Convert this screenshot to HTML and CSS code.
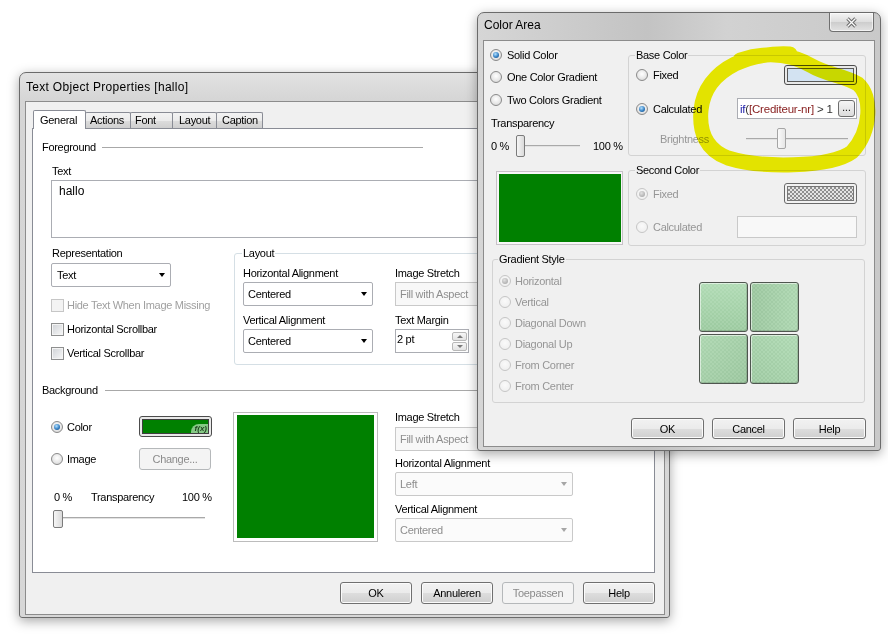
FILE: index.html
```html
<!DOCTYPE html>
<html>
<head>
<meta charset="utf-8">
<title>Text Object Properties</title>
<link rel="stylesheet" href="styles.css">
</head>
<body>
<div class="desktop">

  <div class="win win-props">
    <div class="titlebar"><span class="title">Text Object Properties [hallo]</span></div>
    <div class="client client-props">
      <div class="tabs">
        <div class="tab tab-general active">General</div>
        <div class="tab tab-actions">Actions</div>
        <div class="tab tab-font">Font</div>
        <div class="tab tab-layout">Layout</div>
        <div class="tab tab-caption">Caption</div>
      </div>
      <div class="tabpanel">
        <div class="sect-head sect-fg"><span>Foreground</span><span class="rule rule-fg"></span></div>
        <div class="fg-body">
          <div class="label lbl-text">Text</div>
          <div class="textarea">hallo</div>
          <div class="fg-row">
            <div class="fg-left">
              <div class="label">Representation</div>
              <div class="combo combo-rep"><span>Text</span><i class="arrow"></i></div>
              <div class="check-row first disabled"><span class="checkbox"></span><span>Hide Text When Image Missing</span></div>
              <div class="check-row"><span class="checkbox"></span><span>Horizontal Scrollbar</span></div>
              <div class="check-row"><span class="checkbox"></span><span>Vertical Scrollbar</span></div>
            </div>
            <fieldset class="group group-layout">
              <legend>Layout</legend>
              <div class="layout-cols">
                <div class="col col-a">
                  <div class="label">Horizontal Alignment</div>
                  <div class="combo"><span>Centered</span><i class="arrow"></i></div>
                  <div class="label gap7">Vertical Alignment</div>
                  <div class="combo"><span>Centered</span><i class="arrow"></i></div>
                </div>
                <div class="col col-b">
                  <div class="label">Image Stretch</div>
                  <div class="field disabled">Fill with Aspect</div>
                  <div class="label gap7">Text Margin</div>
                  <div class="field spin"><span>2 pt</span><span class="spinner"><i class="spin-btn up"></i><i class="spin-btn down"></i></span></div>
                </div>
              </div>
            </fieldset>
          </div>
        </div>

        <div class="sect-head sect-bg"><span>Background</span><span class="rule rule-bg"></span></div>
        <div class="bg-body">
          <div class="bg-left">
            <div class="bg-row row-color">
              <span class="radio-row"><span class="radio checked"></span><span>Color</span></span>
              <span class="colorbtn"><span class="swatch"><span class="fx">f(x)</span></span></span>
            </div>
            <div class="bg-row row-image">
              <span class="radio-row"><span class="radio"></span><span>Image</span></span>
              <span class="btn btn-change disabled">Change...</span>
            </div>
            <div class="pct-row"><span class="p0">0 %</span><span class="pt">Transparency</span><span>100 %</span></div>
            <div class="slider slider-bg"><span class="thumb"></span></div>
          </div>
          <div class="preview"><div class="green"></div></div>
          <div class="bg-right">
            <div class="label">Image Stretch</div>
            <div class="field disabled f-stretch">Fill with Aspect</div>
            <div class="label g5">Horizontal Alignment</div>
            <div class="combo disabled"><span>Left</span><i class="arrow"></i></div>
            <div class="label g6">Vertical Alignment</div>
            <div class="combo disabled"><span>Centered</span><i class="arrow"></i></div>
          </div>
        </div>
      </div>
      <div class="buttons">
        <span class="btn">OK</span>
        <span class="btn">Annuleren</span>
        <span class="btn disabled">Toepassen</span>
        <span class="btn">Help</span>
      </div>
    </div>
  </div>

  <div class="win win-color">
    <div class="titlebar">
      <span class="title">Color Area</span>
      <span class="closebtn">
        <svg width="13" height="11" viewBox="0 0 13 11"><path d="M2.5 1.5 L10.5 9.5 M10.5 1.5 L2.5 9.5" stroke="#6a6a6a" stroke-width="3.4" fill="none"/><path d="M2.5 1.5 L10.5 9.5 M10.5 1.5 L2.5 9.5" stroke="#fbfbfb" stroke-width="1.3" fill="none"/></svg>
      </span>
    </div>
    <div class="client client-color">
      <div class="ca-grid">
        <div class="ca-left">
          <div class="radio-row"><span class="radio checked"></span><span>Solid Color</span></div>
          <div class="radio-row r2"><span class="radio"></span><span>One Color Gradient</span></div>
          <div class="radio-row r3"><span class="radio"></span><span>Two Colors Gradient</span></div>
          <div class="label ca-trans">Transparency</div>
          <div class="ca-slider-row"><span class="p0">0 %</span><span class="slider slider-ca"><span class="thumb"></span></span><span class="p100">100 %</span></div>
        </div>
        <fieldset class="group ca-group base">
          <legend>Base Color</legend>
          <div class="ca-row row-fixed">
            <span class="radio-row"><span class="radio"></span><span>Fixed</span></span>
            <span class="colorbtn cb-blue"><span class="swatch"></span></span>
          </div>
          <div class="ca-row row-calc">
            <span class="radio-row"><span class="radio checked"></span><span>Calculated</span></span>
            <span class="expr"><span class="expr-text"><span class="kw">if</span><span class="op">(</span><span class="fld">[Crediteur-nr]</span><span class="op"> &gt; 1</span></span><span class="dots">...</span></span>
          </div>
          <div class="ca-row row-bright">
            <span class="dis-text bright-lbl">Brightness</span>
            <span class="slider slider-bright"><span class="thumb"></span></span>
          </div>
        </fieldset>
        <div class="ca-preview"><div class="green"></div></div>
        <fieldset class="group ca-group second">
          <legend>Second Color</legend>
          <div class="ca-row row2-fixed">
            <span class="radio-row dis-text"><span class="radio dis checked"></span><span>Fixed</span></span>
            <span class="colorbtn cb-checker"><span class="swatch"></span></span>
          </div>
          <div class="ca-row row2-calc">
            <span class="radio-row dis-text"><span class="radio dis"></span><span>Calculated</span></span>
            <span class="field disabled f-empty"></span>
          </div>
        </fieldset>
        <fieldset class="group ca-group gradient">
          <legend>Gradient Style</legend>
          <div class="grad-body">
            <div class="grad-list">
              <div class="radio-row dis-text"><span class="radio dis checked"></span><span>Horizontal</span></div>
              <div class="radio-row dis-text"><span class="radio dis"></span><span>Vertical</span></div>
              <div class="radio-row dis-text"><span class="radio dis"></span><span>Diagonal Down</span></div>
              <div class="radio-row dis-text"><span class="radio dis"></span><span>Diagonal Up</span></div>
              <div class="radio-row dis-text"><span class="radio dis"></span><span>From Corner</span></div>
              <div class="radio-row dis-text"><span class="radio dis"></span><span>From Center</span></div>
            </div>
            <div class="tiles">
              <span class="tile t1"></span><span class="tile t2"></span>
              <span class="tile t3"></span><span class="tile t4"></span>
            </div>
          </div>
        </fieldset>
        <div class="ca-buttons">
          <span class="btn">OK</span>
          <span class="btn">Cancel</span>
          <span class="btn">Help</span>
        </div>
      </div>
    </div>
  </div>

  <svg class="scribble" width="888" height="640" viewBox="0 0 888 640">
    <path d="M740 60 C770 50 795 56 812 66 C825 74 845 76 858 84 C872 96 872 130 852 152 C830 168 760 168 728 158 C706 150 699 132 701 110 C703 90 715 74 735 64 C750 57 768 53 790 54" fill="none" stroke="#f2f200" stroke-width="15" stroke-linecap="round" stroke-linejoin="round"/>
  </svg>
</div>
</body>
</html>
```

FILE: styles.css
```css
* { box-sizing: border-box; }
html, body { margin: 0; padding: 0; }
body {
  background: #fff;
  font-family: "Liberation Sans", Arial, sans-serif;
  font-size: 11px;
  letter-spacing: -0.3px;
  color: #000;
  width: 888px;
  height: 640px;
  overflow: hidden;
}
.desktop { position: relative; width: 888px; height: 640px; }

/* windows */
.win {
  position: absolute;
  border: 1px solid #6b6b6b;
  border-radius: 7px 7px 3px 3px;
  display: flex;
  flex-direction: column;
  box-shadow: 0 3px 12px rgba(0,0,0,.35);
}
.win-props {
  left: 19px; top: 72px; width: 651px; height: 546px;
  background: linear-gradient(180deg, #e2e2e2, #d5d5d5 28px, #d7d7d7);
}
.win-color {
  left: 477px; top: 12px; width: 404px; height: 439px;
  background: linear-gradient(90deg, #d6d6d6, #c3c3c3 42%, #d2d2d2 62%, #c9c9c9);
}
.titlebar { display: flex; justify-content: space-between; align-items: flex-start; flex: none; }
.win-props .titlebar { height: 28px; padding-left: 6px; }
.win-color .titlebar { height: 27px; padding-left: 6px; }
.title { font-size: 12px; letter-spacing: 0; }
.win-props .title { line-height: 28px; letter-spacing: .3px; }
.win-color .title { line-height: 24px; }
.closebtn {
  width: 45px; height: 19px; margin-right: 6px;
  border: 1px solid #707070; border-top: none;
  border-radius: 0 0 4px 4px;
  background: linear-gradient(#f4f4f4, #dedede 50%, #cdcdcd 51%, #e2e2e2);
  box-shadow: inset 0 0 0 1px rgba(255,255,255,.6);
  display: flex; align-items: center; justify-content: center;
}
.client { background: #f0f0f0; border: 1px solid #8c8c8c; flex: none; }
.client-props { margin: 0 4px 0 5px; height: 514px; padding: 8px 0 0 6px; }
.client-color { margin: 0 5px; height: 407px; padding: 7px 0 0 8px; }

/* tabs */
.tabs { display: flex; align-items: flex-end; height: 18px; margin-left: 1px; position: relative; z-index: 1; }
.tab {
  height: 16px; margin-right: -1px;
  border: 1px solid #898c95; border-bottom: none;
  border-radius: 2px 2px 0 0;
  line-height: 15px;
  background: linear-gradient(#f3f3f3, #ebebeb 50%, #dddddd 51%, #cfcfcf);
}
.tab.active { height: 19px; margin-bottom: -1px; background: #fff; line-height: 18px; }
.tab-general { width: 53px; padding-left: 6px; }
.tab-actions { width: 46px; padding-left: 4px; }
.tab-font { width: 43px; padding-left: 4px; }
.tab-layout { width: 45px; padding-left: 6px; }
.tab-caption { width: 47px; padding-left: 5px; }
.tabpanel { width: 623px; height: 445px; background: #fff; border: 1px solid #898c95; padding-left: 9px; }

.sect-head { display: flex; align-items: center; height: 14px; line-height: 14px; }
.sect-fg { margin-top: 11px; }
.sect-bg { margin-top: 18px; }
.rule { height: 1px; background: #a8a8a8; }
.rule-fg { width: 321px; margin-left: 6px; }
.rule-bg { width: 540px; margin-left: 7px; }

.label { height: 14px; line-height: 14px; white-space: nowrap; }
.fg-body { margin-left: 9px; }
.lbl-text { margin-top: 10px; padding-left: 1px; }
.textarea {
  margin-top: 2px; width: 594px; height: 58px;
  border: 1px solid #abadb3; background: #fff;
  padding: 3px 7px; font-size: 12px; letter-spacing: 0; line-height: 14px;
}
.fg-row { display: flex; margin-top: 8px; }
.fg-left { width: 183px; display: flex; flex-direction: column; }
.fg-left > .label { padding-left: 1px; }

.combo {
  height: 24px; border: 1px solid #abadb3; border-radius: 2px; background: #fff;
  display: flex; align-items: center; justify-content: space-between;
  padding: 0 5px 0 4px; white-space: nowrap;
}
.combo .arrow { width: 0; height: 0; border-left: 3.5px solid transparent; border-right: 3.5px solid transparent; border-top: 4px solid #000; }
.combo.disabled { border-color: #c9c9c9; color: #8e8e8e; background: #fbfbfb; }
.combo.disabled .arrow { border-top-color: #a6a6a6; }
.combo-rep { width: 120px; margin-top: 3px; padding-left: 5px; }

.field {
  height: 24px; border: 1px solid #abadb3; background: #fff;
  padding-left: 4px; line-height: 22px; white-space: nowrap; overflow: hidden;
}
.field.disabled { border-color: #c9c9c9; color: #8e8e8e; background: #f8f8f8; }

.check-row { height: 24px; display: flex; align-items: center; gap: 3px; }
.check-row.first { margin-top: 6px; }
.check-row.disabled { color: #a0a0a0; }
.checkbox {
  width: 13px; height: 13px; flex: none;
  border: 1px solid #8e8f8f;
  background: linear-gradient(135deg, #cfd2d6, #f8f8f8);
  box-shadow: inset 0 0 0 1px #f4f4f4;
}
.check-row.disabled .checkbox { border-color: #c6c6c6; background: #f3f3f3; box-shadow: none; }

.group { margin: 0; border: 1px solid #d5dfe5; border-radius: 3px; min-width: 0; }
.group > legend { padding: 0 1px; margin-left: -1px; line-height: 14px; height: 14px; }
.group-layout { width: 411px; padding: 6px 0 10px 8px; }
.layout-cols { display: flex; gap: 22px; }
.col { display: flex; flex-direction: column; }
.col-a { width: 130px; }
.col-b { width: 200px; }
.col .combo, .col .field { margin-top: 2px; }
.gap7 { margin-top: 7px; }
.field.spin { width: 74px; display: flex; justify-content: space-between; align-items: flex-start; line-height: 14px; padding: 2px 1px 0 1px; }
.spinner { display: flex; flex-direction: column; gap: 1px; }
.spin-btn {
  width: 15px; height: 9px; border: 1px solid #b8b8b8; border-radius: 2px;
  background: linear-gradient(#f7f7f7, #e3e3e3);
  display: flex; align-items: center; justify-content: center;
}
.spin-btn::after { content: ""; width: 0; height: 0; border-left: 3px solid transparent; border-right: 3px solid transparent; }
.spin-btn.up::after { border-bottom: 3px solid #7a7a7a; }
.spin-btn.down::after { border-top: 3px solid #7a7a7a; }

/* background section */
.bg-body { display: flex; margin-left: 9px; }
.bg-left { width: 182px; display: flex; flex-direction: column; }
.bg-row { display: flex; align-items: center; height: 21px; }
.row-color { margin-top: 19px; }
.row-image { margin-top: 11px; }
.bg-row .radio-row { width: 88px; gap: 4px; }
.radio-row { display: flex; align-items: center; gap: 5px; height: 14px; line-height: 14px; white-space: nowrap; }
.radio {
  width: 12px; height: 12px; flex: none; border-radius: 50%;
  border: 1px solid #8a8a8a;
  background: radial-gradient(circle at 50% 40%, #ffffff, #e8e8e8 55%, #cdcdcd);
  display: flex; align-items: center; justify-content: center;
}
.radio.checked::after {
  content: ""; width: 6px; height: 6px; border-radius: 50%;
  background: radial-gradient(circle at 40% 35%, #b5e2ff, #3480c4 55%, #123f6e);
}
.radio.dis { border-color: #c6c6c6; background: radial-gradient(circle at 50% 40%, #fafafa, #ececec); }
.radio.dis.checked::after { background: radial-gradient(circle at 40% 35%, #e2e2e2, #9c9c9c); }

.colorbtn {
  width: 73px; height: 21px; border: 1px solid #4c4c4c; border-radius: 3px;
  padding: 2px; background: #e9e9e9; display: flex;
}
.swatch { flex: 1; border: 1px solid #3f3f3f; background: #008000; display: flex; justify-content: flex-end; align-items: flex-end; overflow: hidden; }
.fx {
  background: #86c986; border-radius: 8px 0 0 0; color: #1e3f1e;
  font-size: 8px; font-style: italic; font-weight: bold; letter-spacing: 0;
  line-height: 9px; padding: 0 1px 0 4px;
}
.btn-change { width: 73px; height: 20px; }
.pct-row { margin-top: 21px; height: 14px; line-height: 14px; display: flex; padding-left: 3px; white-space: nowrap; }
.pct-row .p0 { width: 37px; }
.pct-row .pt { width: 91px; }
.slider {
  display: flex;
  background: linear-gradient(#a9a9a9, #a9a9a9) no-repeat, linear-gradient(#e2e2e2, #e2e2e2) no-repeat;
}
.thumb {
  width: 10px; flex: none; border: 1px solid #7b7b7b; border-radius: 2px;
  background: linear-gradient(90deg, #f6f6f6, #dadada);
}
.slider-bg { width: 154px; height: 20px; margin-top: 4px; background-size: 150px 1px, 150px 1px; background-position: 4px 9px, 4px 10px; }
.slider-bg .thumb { height: 18px; margin: 2px 0 0 2px; }
.preview { width: 145px; height: 130px; margin-top: 15px; border: 1px solid #bcbcbc; padding: 2px 3px 3px 3px; background: #fff; }
.green { width: 100%; height: 100%; background: #008000; }
.bg-right { width: 178px; margin-left: 17px; margin-top: 13px; display: flex; flex-direction: column; }
.bg-right .f-stretch { margin-top: 3px; }
.bg-right .g5 { margin-top: 5px; }
.bg-right .g6 { margin-top: 6px; }
.bg-right .combo { margin-top: 2px; }

/* buttons */
.buttons { display: flex; justify-content: flex-end; gap: 9px; width: 623px; margin-top: 9px; }
.btn {
  width: 72px; height: 22px; border: 1px solid #707070; border-radius: 3px;
  background: linear-gradient(#f2f2f2, #ebebeb 50%, #dddddd 51%, #cfcfcf);
  box-shadow: inset 0 0 0 1px #fbfbfb;
  display: flex; align-items: center; justify-content: center; white-space: nowrap;
}
.btn.disabled { border-color: #b5b8ba; background: #f4f4f4; color: #8b8b8b; box-shadow: none; }

/* color area */
.ca-grid { display: grid; grid-template-columns: 136px 238px; row-gap: 6px; align-items: start; }
.ca-left { margin-left: -2px; display: flex; flex-direction: column; }
.ca-left .r2 { margin-top: 8px; }
.ca-left .r3 { margin-top: 9px; }
.ca-trans { margin-top: 9px; padding-left: 1px; }
.ca-slider-row { margin-top: 5px; height: 22px; display: flex; align-items: center; white-space: nowrap; }
.ca-slider-row .p0 { width: 26px; padding-left: 1px; }
.ca-slider-row .p100 { margin-left: 13px; }
.slider-ca { width: 64px; height: 22px; background-size: 60px 1px, 60px 1px; background-position: 4px 10px, 4px 11px; }
.slider-ca .thumb { height: 22px; width: 9px; }

.ca-group { border-color: #d3d3d3; }
.base { width: 238px; padding: 0 8px 6px 7px; }
.second { width: 238px; padding: 0 8px 7px 7px; }
.gradient { grid-column: 1 / 3; width: 373px; padding: 4px 0 6px 6px; }
.ca-row { display: flex; align-items: center; justify-content: space-between; }
.row-fixed { margin-top: 3px; height: 20px; }
.row-calc { margin-top: 13px; height: 21px; }
.row-bright { margin-top: 9px; height: 21px; }
.cb-blue { height: 20px; }
.cb-blue .swatch { background: #d3e3f2; border-color: #5a5a5a; }
.expr {
  width: 120px; height: 21px; border: 1px solid #abadb3; background: #fff;
  display: flex; align-items: center; padding-left: 2px;
}
.expr-text { flex: 1; white-space: nowrap; font-size: 11.5px; letter-spacing: -0.2px; }
.kw { color: #1b1ba8; }
.op { color: #333; }
.fld { color: #861c1c; }
.dots {
  flex: none; width: 17px; height: 17px; margin-right: 1px;
  border: 1px solid #6d6d6d; border-radius: 3px;
  background: linear-gradient(#f5f5f5, #dcdcdc);
  font-size: 10px; letter-spacing: 0; line-height: 13px; text-align: center;
}
.dis-text { color: #969696; }
.bright-lbl { padding-left: 24px; }
.slider-bright { width: 103px; height: 21px; margin-right: 9px; background-size: 102px 1px, 102px 1px; background-position: 1px 10px, 1px 11px; }
.slider-bright .thumb { width: 9px; height: 21px; margin-left: 32px; border-color: #a5a5a5; background: linear-gradient(90deg, #fafafa, #e6e6e6); }

.ca-preview { width: 127px; height: 74px; margin: 8px 0 0 4px; border: 1px solid #c8c2c8; padding: 2px 1px 2px 2px; background: #f7f7f7; }
.ca-preview .green { background: #008000; }
.row2-fixed { margin-top: 6px; height: 21px; }
.row2-calc { margin-top: 12px; height: 22px; }
.cb-checker { border-color: #6a6a6a; background: #f2f2f2; }
.cb-checker .swatch {
  border-color: #777;
  background: repeating-conic-gradient(#8f8f8f 0 25%, #e4e4e4 0 50%) 0 0 / 4px 4px;
}
.f-empty { width: 120px; height: 22px; }

.grad-body { display: flex; }
.grad-list { width: 200px; }
.grad-list .radio-row { height: 21px; gap: 4px; }
.tiles { display: grid; grid-template-columns: 49px 49px; grid-template-rows: 50px 50px; gap: 2px; margin-top: 12px; }
.tile {
  border: 1px solid #4f564f; border-radius: 3px;
  box-shadow: inset 1px 1px 0 rgba(255,255,255,.55), inset -1px -1px 0 rgba(0,0,0,.12);
}
.t1 { background: linear-gradient(rgba(190,230,195,.5), rgba(140,190,145,.3)), repeating-conic-gradient(#a3cfa6 0 25%, #b0d8b3 0 50%) 0 0 / 4px 4px; }
.t2 { background: linear-gradient(90deg, rgba(140,185,145,.3), rgba(190,230,195,.4)), repeating-conic-gradient(#a0c9a3 0 25%, #aed5b0 0 50%) 0 0 / 4px 4px; }
.t3 { background: linear-gradient(135deg, rgba(190,230,195,.4), rgba(140,185,145,.3)), repeating-conic-gradient(#a0caa3 0 25%, #add4af 0 50%) 0 0 / 4px 4px; }
.t4 { background: linear-gradient(45deg, rgba(140,185,145,.25), rgba(190,230,195,.45)), repeating-conic-gradient(#a2cca5 0 25%, #b0d8b3 0 50%) 0 0 / 4px 4px; }

.ca-buttons { grid-column: 1 / 3; display: flex; justify-content: flex-end; gap: 8px; margin-top: 9px; }
.ca-buttons .btn { width: 73px; height: 21px; }

.scribble { position: absolute; left: 0; top: 0; z-index: 10; pointer-events: none; mix-blend-mode: multiply; }
```
